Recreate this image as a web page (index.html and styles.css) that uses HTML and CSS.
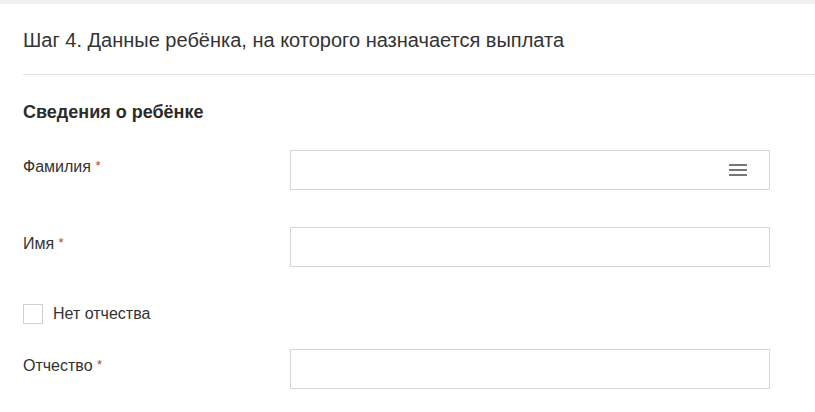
FILE: index.html
```html
<!DOCTYPE html>
<html lang="ru">
<head>
    <meta charset="UTF-8">
    <title>Шаг 4</title>
    <link rel="stylesheet" href="styles.css">
</head>
<body>
<div class="topbar"></div>
<div class="page">
    <h1 class="step-title">Шаг 4. Данные ребёнка, на которого назначается выплата</h1>
    <h2 class="section-title">Сведения о ребёнке</h2>

    <div class="field">
        <label class="field-label">Фамилия <span class="req">*</span></label>
        <div class="input with-icon">
            <svg class="menu-icon" width="18" height="12" viewBox="0 0 18 12">
                <rect x="0" y="0" width="18" height="2" fill="#777"/>
                <rect x="0" y="5" width="18" height="2" fill="#777"/>
                <rect x="0" y="10" width="18" height="2" fill="#777"/>
            </svg>
        </div>
    </div>

    <div class="field">
        <label class="field-label">Имя <span class="req">*</span></label>
        <div class="input"></div>
    </div>

    <div class="check-row">
        <span class="checkbox"></span>
        <span class="check-label">Нет отчества</span>
    </div>

    <div class="field">
        <label class="field-label">Отчество <span class="req">*</span></label>
        <div class="input"></div>
    </div>
</div>
</body>
</html>
```

FILE: styles.css
```css
body {
    margin: 0;
    font-family: "Liberation Sans", Arial, sans-serif;
    color: #333;
    background: #fff;
}

.topbar {
    height: 4px;
    background: #f1f1f1;
}

.page {
    padding-left: 23px;
}

.step-title {
    margin: 0;
    padding: 22px 0 20px;
    font-size: 20px;
    font-weight: normal;
    line-height: 28px;
    color: #333;
    border-bottom: 1px solid #e3e3e3;
}

.section-title {
    margin: 0;
    padding: 26px 0 0;
    font-size: 18px;
    font-weight: bold;
    line-height: 22px;
    color: #2b2b2b;
}

.field {
    display: flex;
    margin-top: 27px;
}

.field + .field {
    margin-top: 37px;
}

.field-label {
    width: 267px;
    padding-top: 6px;
    font-size: 16px;
    line-height: 20px;
    color: #333;
}

.req {
    color: #c0392b;
    font-size: 13px;
    vertical-align: 2px;
}

.input {
    width: 478px;
    height: 38px;
    border: 1px solid #d6d6d6;
    background: #fff;
    display: flex;
    align-items: center;
    justify-content: flex-end;
}

.menu-icon {
    margin-right: 22px;
}

.check-row {
    display: flex;
    align-items: center;
    height: 20px;
    margin-top: 37px;
}

.checkbox {
    width: 18px;
    height: 18px;
    border: 1px solid #d0d0d0;
    background: #fff;
}

.check-label {
    margin-left: 10px;
    font-size: 16px;
    color: #333;
}

.check-row + .field {
    margin-top: 25px;
}
```
